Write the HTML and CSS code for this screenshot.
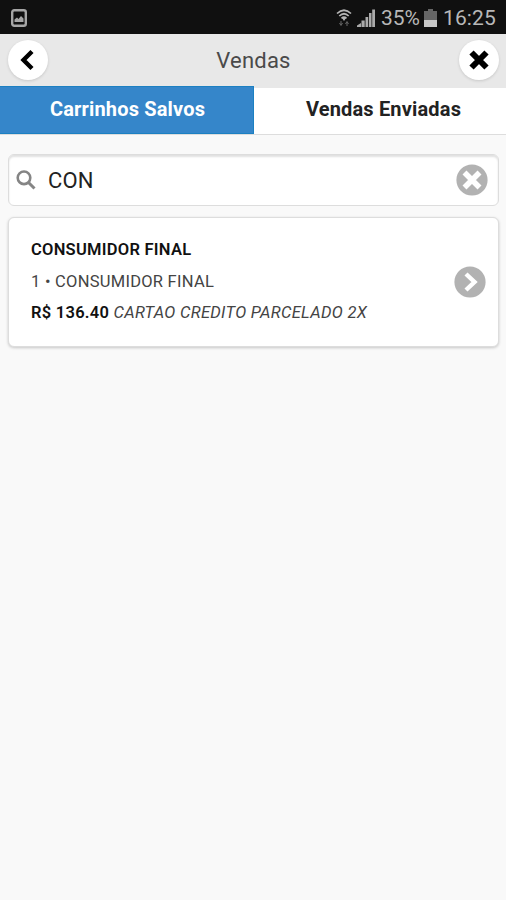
FILE: index.html
```html
<!DOCTYPE html>
<html lang="pt-BR">
<head>
<meta charset="utf-8">
<title>Vendas</title>
<link rel="stylesheet" href="styles.css">
</head>
<body>
<div class="status">
  <svg class="shot" width="16" height="18" viewBox="0 0 16 18"><rect x="1.200" y="1.200" width="13.600" height="15.600" rx="2" fill="none" stroke="#a6a6a6" stroke-width="2.400"/><path d="M3.500 13V10.500l2.500-2 1.500 1.500 2.500-3 2.500 2.500V13z" fill="#a6a6a6"/></svg>
  <svg class="wifi" width="16" height="18" viewBox="0 0 16 18"><path d="M1 4.500Q8-2 15 4.500M3.300 7Q8 2.500 12.700 7M5.500 9.300Q8 7 10.500 9.300" fill="none" stroke="#b5b5b5" stroke-width="1.700"/><path d="M6 9h4l-2 3z" fill="#b5b5b5"/><path d="M5 12v4M3.500 14L5 16.500 6.500 14M11 17v-4M9.500 15l1.500-2.500 1.500 2.500" fill="none" stroke="#666" stroke-width="1"/></svg>
  <svg class="signal" width="18" height="18" viewBox="0 0 18 18"><path d="M0 18v-1.500L4 14v4zM4.500 18v-6.500h3.200V18zM8.500 18V8h2.700v10zM12 18V4h2.500v14zM15.200 18V0.500H18V18z" fill="#aaa"/></svg>
  <span class="pct">35%</span>
  <svg class="batt" width="13" height="18" viewBox="0 0 13 18"><path d="M4 0h5v2h4v16H0V2h4z" fill="#666"/><path d="M0 11h13v7H0z" fill="#c8c8c8"/></svg>
  <span class="time">16:25</span>
</div>
<header class="header">
  <button class="round" aria-label="Voltar"><svg width="40" height="40" viewBox="0 0 40 40"><path d="M24 11.500L15.500 20 24 28.500" fill="none" stroke="#000" stroke-width="4.400"/></svg></button>
  <h1 class="title">Vendas</h1>
  <button class="round" aria-label="Fechar"><svg width="40" height="40" viewBox="0 0 40 40"><path d="M12.500 12.500l15 15M27.500 12.500l-15 15" stroke="#000" stroke-width="6"/></svg></button>
</header>
<nav class="tabs">
  <div class="tab active"><span>Carrinhos Salvos</span></div>
  <div class="tab sent"><span>Vendas Enviadas</span></div>
</nav>
<main class="content">
  <div class="search">
    <svg width="20" height="20" viewBox="0 0 20 20"><circle cx="8" cy="7.800" r="6.300" fill="none" stroke="#858585" stroke-width="2.600"/><path d="M12.500 12.500l6 6" stroke="#858585" stroke-width="3"/></svg>
    <span class="query">CON</span>
    <svg class="clear" width="32" height="32" viewBox="0 0 32 32"><circle cx="16" cy="16" r="15.600" fill="#b2b2b2"/><path d="M8.500 8.500l15 15M23.500 8.500l-15 15" stroke="#fff" stroke-width="5.600"/></svg>
  </div>
  <article class="card">
    <div class="info">
      <p class="name"><b>CONSUMIDOR FINAL</b></p>
      <p class="client">1 • CONSUMIDOR FINAL</p>
      <p class="payment"><b>R$ 136.40</b> <i>CARTAO CREDITO PARCELADO 2X</i></p>
    </div>
    <svg width="32" height="32" viewBox="0 0 32 32"><circle cx="16" cy="16" r="15.600" fill="#b2b2b2"/><path d="M12 8l8.500 8-8.500 8" fill="none" stroke="#fff" stroke-width="4.400"/></svg>
  </article>
</main>
</body>
</html>
```
FILE: styles.css
```css
* { box-sizing: border-box; }
body {
  margin: 0;
  height: 900px;
  background: #f9f9f9;
  color: #222;
  font-family: Roboto, sans-serif;
  overflow: hidden;
}
svg { display: block; flex: none; }
.status {
  height: 34px;
  display: flex;
  align-items: center;
  padding: 1px 10px 0 11px;
  background: #101010;
  color: #b8b8b8;
  font-size: 21px;
  line-height: 34px;
  white-space: nowrap;
}
.wifi { margin-left: auto; }
.signal { margin-left: 5px; }
.pct { width: 40px; margin-left: 6px; letter-spacing: -.1px; }
.batt { margin: 0 6px 0 3px; }
.time { width: 53px; letter-spacing: .1px; }
.header {
  height: 52px;
  display: flex;
  align-items: center;
  justify-content: space-between;
  padding: 0 7px 0 8px;
  background: #e8e8e8;
}
.round {
  width: 40px;
  height: 40px;
  padding: 0;
  border: 0;
  border-radius: 50%;
  background: #fff;
  box-shadow: 0 1px 3px rgba(0, 0, 0, .14);
}
.title {
  margin: 0;
  font-size: 22px;
  font-weight: 400;
  letter-spacing: .2px;
  color: #4a4a4a;
}
.tabs { height: 49px; display: flex; background: #fff; border-bottom: 1px solid #ddd; }
.tab {
  flex: 1;
  height: 48px;
  padding-bottom: 2px;
  display: flex;
  align-items: center;
  justify-content: center;
  border-top: 2px solid #e8e8e8;
  font-size: 20px;
  font-weight: 700;
  letter-spacing: .17px;
  white-space: nowrap;
}
.active {
  flex: 0 0 254px;
  padding-left: 2px;
  background: #3586ca;
  border: 1px solid #1c80c2;
  border-left: 0;
  color: #fff;
}
.sent { padding: 0 0 4px 7px; }
.content { padding: 19px 7px 0 8px; }
.search {
  height: 52px;
  display: flex;
  align-items: center;
  padding: 0 10px 0 7px;
  background: #fff;
  border: 1px solid #ddd;
  border-radius: 6px;
  box-shadow: inset 0 2px 2px rgba(0, 0, 0, .12);
}
.query { margin-left: 12px; font-size: 22px; letter-spacing: .2px; }
.clear { margin-left: auto; }
.card {
  height: 130px;
  margin-top: 11px;
  padding: 0 12px 0 22px;
  display: flex;
  align-items: center;
  justify-content: space-between;
  background: #fff;
  border: 1px solid #ddd;
  border-radius: 6px;
  box-shadow: 0 1px 3px rgba(0, 0, 0, .2);
  font-size: 16.500px;
  letter-spacing: .26px;
  white-space: nowrap;
}
.info { padding-bottom: 3px; }
.info p { margin: 0; line-height: 31px; }
.info .name { line-height: 32px; }
.info b { font-weight: 600; color: #111; }
.client, .payment { color: #444; }
.payment i { letter-spacing: .3px; }
```
